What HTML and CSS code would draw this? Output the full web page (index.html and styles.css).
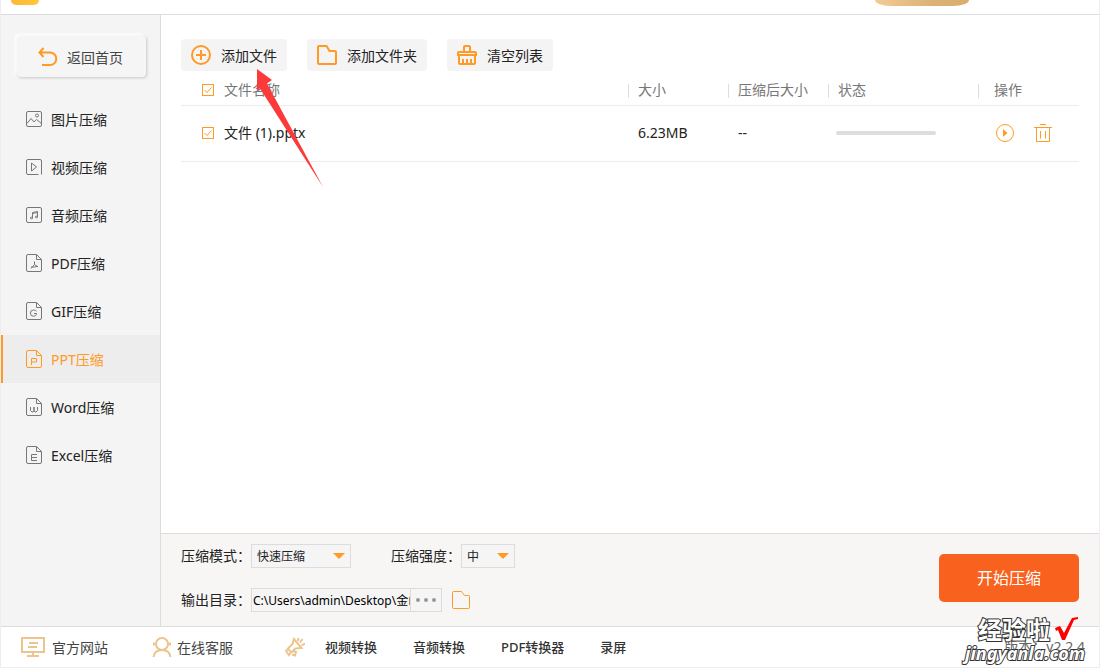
FILE: index.html
```html
<!DOCTYPE html>
<html lang="zh-CN">
<head>
<meta charset="utf-8">
<title>PPT压缩</title>
<link rel="stylesheet" href="styles.css">
</head>
<body>
<svg class="defs" aria-hidden="true">
  <symbol id="doc" viewBox="0 0 16 18"><path d="M2 .5h8.500l5 5v10.500a1.500 1.500 0 0 1-1.500 1.500H2A1.500 1.500 0 0 1 .5 16V2A1.500 1.500 0 0 1 2 .5zM10.500 .5v5h5"/></symbol>
  <symbol id="check" viewBox="0 0 12 12"><path d="M2.500 6l2.500 2.500 4.500-5"/></symbol>
</svg>
<div class="window">
  <header class="titlebar">
    <span class="logo"></span>
    <span class="vip"></span>
  </header>
  <div class="body">
    <aside class="sidebar">
      <button class="home" type="button">
        <svg width="20" height="20" viewBox="0 0 20 20" fill="none" stroke="#ff9a26" stroke-width="2"><path d="M5.500 1L1.500 5.500l4 4.500M1.500 5.500H12a6 6 0 0 1 0 12.500H4"/></svg>
        <span>返回首页</span>
      </button>
      <nav class="menu">
        <a class="item" href="#"><svg class="icon" viewBox="0 0 16 18"><rect x=".5" y="1.500" width="15" height="15" rx="1.500"/><circle cx="11" cy="5.500" r="1.500"/><path d="M1 13.500l4-5 3 3.500 2.500-2.500 5 4"/></svg><span>图片压缩</span></a>
        <a class="item" href="#"><svg class="icon" viewBox="0 0 16 18"><path d="M12.500 16.500H2A1.500 1.500 0 0 1 .5 15V3A1.500 1.500 0 0 1 2 1.500h12A1.500 1.500 0 0 1 15.500 3v13.500M5.500 5v8l5-4z"/></svg><span>视频压缩</span></a>
        <a class="item" href="#"><svg class="icon" viewBox="0 0 16 18"><rect x=".5" y="1.500" width="15" height="15" rx="1.500"/><path d="M6.500 12V6.500l5-1V11M6.500 7.500l5-1"/><ellipse cx="5.500" cy="12" rx="1.200" ry=".8"/><ellipse cx="10.500" cy="11" rx="1.200" ry=".8"/></svg><span>音频压缩</span></a>
        <a class="item" href="#"><svg class="icon" viewBox="0 0 16 18"><use href="#doc"/><path d="M8.500 7.500v3L5 14.500M8.500 10.500l3.500 2.500M5 13h3.500l3-.8"/></svg><span>PDF压缩</span></a>
        <a class="item" href="#"><svg class="icon" viewBox="0 0 16 18"><use href="#doc"/><path d="M10.500 9.200C9.500 8.200 8.500 8 7.500 8a3 3 0 0 0 0 6.200c1.500 0 3-.6 3-2.700H8"/></svg><span>GIF压缩</span></a>
        <a class="item active" href="#" aria-current="page"><svg class="icon" viewBox="0 0 16 18"><use href="#doc"/><path d="M5.500 15V8.500h5v3.500h-5"/></svg><span>PPT压缩</span></a>
        <a class="item" href="#"><svg class="icon" viewBox="0 0 16 18"><use href="#doc"/><path d="M4.500 9v3.500l1.500 1.500h1l1-1.500V9v3.500L9 14h1l1.500-1.500V9"/></svg><span>Word压缩</span></a>
        <a class="item" href="#"><svg class="icon" viewBox="0 0 16 18"><use href="#doc"/><path d="M11 8.500H5.500v6H11M5.500 11.500H11"/></svg><span>Excel压缩</span></a>
      </nav>
    </aside>
    <main class="main">
      <section class="content">
        <div class="toolbar">
          <button class="tool" type="button">
            <svg width="20" height="20" viewBox="0 0 20 20"><circle cx="10" cy="10" r="9"/><path d="M10 5v10M5 10h10"/></svg><span>添加文件</span>
          </button>
          <button class="tool" type="button">
            <svg width="20" height="20" viewBox="0 0 20 20"><path d="M2 1h7.500l3 5H18a1 1 0 0 1 1 1v11a1 1 0 0 1-1 1H2a1 1 0 0 1-1-1V2a1 1 0 0 1 1-1z"/></svg><span>添加文件夹</span>
          </button>
          <button class="tool" type="button">
            <svg width="20" height="20" viewBox="0 0 20 20"><path d="M7 6V2a1 1 0 0 1 1-1h4a1 1 0 0 1 1 1v4M2 7h16a1 1 0 0 1 1 1v2H1V8a1 1 0 0 1 1-1zM2 10v8a1 1 0 0 0 1 1h14a1 1 0 0 0 1-1v-8M6 14v5M10 14v5M14 14v5"/></svg><span>清空列表</span>
          </button>
        </div>
        <table class="files">
          <colgroup><col><col class="c-size"><col class="c-size"><col class="c-state"><col class="c-action"></colgroup>
          <thead>
            <tr>
              <th class="name"><label class="pick"><input type="checkbox" checked><svg><use href="#check"/></svg><span>文件名称</span></label></th>
              <th>大小</th><th>压缩后大小</th><th>状态</th><th class="action">操作</th>
            </tr>
          </thead>
          <tbody>
            <tr>
              <td class="name"><label class="pick"><input type="checkbox" checked><svg><use href="#check"/></svg><span>文件 (1).pptx</span></label></td>
              <td>6.23MB</td><td>--</td>
              <td class="state"><div class="bar"></div></td>
              <td class="action"><div class="acts">
                <button type="button" aria-label="开始"><svg width="18" height="18" viewBox="0 0 18 18"><circle cx="9" cy="9" r="8.500"/><path class="solid" d="M7 5l4.500 4L7 13z"/></svg></button>
                <button type="button" aria-label="删除"><svg width="18" height="18" viewBox="0 0 18 18"><path d="M6 .5h6M0 3.500h18M2.500 3.500v14h13v-14M6.500 7v7.500M11.500 7v7.500"/></svg></button>
              </div></td>
            </tr>
          </tbody>
        </table>
        <svg class="pointer" width="68" height="120" viewBox="0 0 68 120"><path d="M1 0l15 11-5 3.500 56 103.500L4 19.500 1 21z" fill="#fd3a3a"/></svg>
      </section>
      <section class="options">
        <div class="fields">
          <div class="line">
            <label for="mode">压缩模式：</label>
            <span class="drop wide"><select id="mode"><option>快速压缩</option></select></span>
            <label class="second" for="level">压缩强度：</label>
            <span class="drop"><select id="level"><option>中</option></select></span>
          </div>
          <div class="line">
            <label for="dir">输出目录：</label>
            <span class="path"><input id="dir" type="text" value="C:\Users\admin\Desktop\金山文档"><button type="button" aria-label="浏览"><i></i><i></i><i></i></button></span>
            <button class="folder" type="button" aria-label="打开目录"><svg width="18" height="18" viewBox="0 0 18 18"><path d="M1.500 .5h8l3 4h4a1 1 0 0 1 1 1v11a1 1 0 0 1-1 1h-15a1 1 0 0 1-1-1v-15a1 1 0 0 1 1-1z"/></svg></button>
          </div>
        </div>
        <button class="start" type="button">开始压缩</button>
      </section>
    </main>
  </div>
  <footer class="footer">
    <a class="site" href="#"><svg width="24" height="20" viewBox="0 0 24 20"><path d="M1 1h22v14H1zM8 6h9M7 10h9M12 15v4M6 19h12"/></svg><span>官方网站</span></a>
    <a class="help" href="#"><svg width="20" height="20" viewBox="0 0 20 20"><circle cx="10" cy="7" r="6"/><path d="M1.500 20c.5-4 3.500-7 8.500-7s8 3 8.500 7M2 5.500v3M18 5.500v3"/></svg><span>在线客服</span></a>
    <svg class="horn" width="20" height="20" viewBox="0 0 20 20"><path d="M9 2l7.500 9-6 .5-4.500 4L3 11.500 7.500 7zM3 11.500l-2 2.500 3 4 2-2.500M8 14l3 1-1 3.500-3-1M13 4l.5-3M15 5.500L17.500 2M16.500 8L20 7"/></svg>
    <nav class="more">
      <a href="#">视频转换</a><a href="#">音频转换</a><a href="#">PDF转换器</a><a href="#">录屏</a>
    </nav>
    <span class="version">版本：v2.2.4</span>
  </footer>
  <div class="mark">
    <div class="mark-top"><span>经验啦</span><svg width="24" height="24" viewBox="0 0 24 24"><path d="M0 11l5-2 4 7L17 1l6-1v2l-4 1-9 20H7L3 13l-2 1z" fill="#f00"/></svg></div>
    <div class="mark-url">jingyanla.com</div>
  </div>
</div>
</body>
</html>
```
FILE: styles.css
```css
* { box-sizing: border-box; }
body {
  margin: 0;
  color: #222;
  background: #fff;
  font: 14px/20px "Noto Sans", "Noto Sans CJK SC", sans-serif;
}
button, input, select { font: inherit; color: inherit; }
button { border: 0; padding: 0; background: none; cursor: pointer; }
a { color: inherit; text-decoration: none; }
svg { flex: none; fill: none; }
.defs { position: absolute; width: 0; height: 0; }

.window {
  position: relative;
  display: flex;
  flex-direction: column;
  min-height: 100vh;
  border: 1px solid #eee;
  border-top: 0;
}
.titlebar {
  display: flex;
  justify-content: space-between;
  height: 15px;
  padding: 0 130px 0 10px;
  border-bottom: 1px solid #dcdcdc;
}
.logo { width: 28px; height: 5px; border-radius: 0 0 6px 6px; background: linear-gradient(90deg, #ffb638, #ffc934); }
.vip { width: 94px; height: 6px; border-radius: 0 0 16px 16px / 0 0 6px 6px; background: linear-gradient(90deg, #f3cb95, #dcb376 60%, #d9ad6d); }
.body { display: flex; flex: 1; }

.sidebar { width: 160px; flex: none; padding-top: 21px; background: #f4f4f4; border-right: 1px solid #dcdcdc; }
.home span, .item span, .tool span { padding-top: 2px; }
.home {
  display: flex;
  align-items: center;
  gap: 9px;
  width: 129px;
  height: 41px;
  margin: 0 0 18px 16px;
  padding-left: 21px;
  border-radius: 4px;
  background: #f5f5f5;
  color: #444;
  box-shadow: 1px 1px 3px rgba(0, 0, 0, .18), -2px -2px 3px #fff;
}
.item {
  display: flex;
  align-items: center;
  gap: 9px;
  height: 48px;
  padding-left: 23px;
  border-left: 2px solid transparent;
}
.icon { width: 16px; height: 18px; stroke: #777; }
.active { color: #ff9a26; background: #ededed; border-color: #ff9a26; }
.active .icon { stroke: #ff9a26; }

.main { display: flex; flex: 1; flex-direction: column; min-width: 0; }
.content { position: relative; flex: 1; padding: 24px 20px 0; }
.toolbar { display: flex; gap: 20px; }
.tool {
  display: flex;
  align-items: center;
  gap: 10px;
  height: 32px;
  padding: 0 10px;
  border-radius: 4px;
  background: #f4f4f4;
}
.tool svg { stroke: #ff9a26; stroke-width: 2; }

.files { width: 100%; margin-top: 4px; table-layout: fixed; border-collapse: collapse; }
.c-size { width: 100px; }
.c-state { width: 150px; }
.c-action { width: 101px; }
.files th, .files td { padding: 0 0 0 10px; text-align: left; font-weight: 400; border-bottom: 1px solid #ececec; }
.files th {
  height: 30px;
  color: #777;
  background: linear-gradient(#ddd, #ddd) 0 9px / 1px 14px no-repeat;
}
.files td { height: 56px; }
.files .name { padding-left: 21px; background: none; }
.files .action { padding-left: 16px; }
.files .state { padding-left: 8px; }
.pick { position: relative; display: flex; align-items: center; gap: 10px; }
.pick input { appearance: none; width: 12px; height: 12px; margin: 0; border: 1px solid #ff9a26; }
.pick svg { position: absolute; left: 0; width: 12px; height: 12px; stroke: #ff9a26; pointer-events: none; }
.pick input:not(:checked) + svg { display: none; }
.bar { width: 100px; height: 4px; border-radius: 2px; background: #ddd; }
.acts { display: flex; gap: 20px; padding-left: 2px; }
.acts svg { display: block; stroke: #ff9a26; }
.acts .solid { fill: #ff9a26; stroke: none; }
.pointer { position: absolute; left: 95px; top: 54px; overflow: visible; }

.options {
  display: flex;
  align-items: center;
  justify-content: space-between;
  padding: 10px 20px 14px;
  border-top: 1px solid #dcdcdc;
  background: #f7f6f5;
}
.fields { display: grid; gap: 20px; }
.line { display: flex; align-items: center; height: 24px; }
.line label { width: 70px; white-space: nowrap; }
.line .second { margin-left: 40px; }
.drop { position: relative; width: 54px; height: 24px; font-size: 12px; }
.drop.wide { width: 100px; }
.drop select { appearance: none; width: 100%; height: 24px; padding: 2px 5px 0; border: 1px solid #dcdcdc; border-radius: 0; background: #f5f5f5; }
.drop::after {
  content: "";
  position: absolute;
  right: 6px;
  top: 9px;
  width: 12px;
  height: 6px;
  background: #ff9a26;
  clip-path: polygon(0 0, 100% 0, 50% 100%);
  pointer-events: none;
}
.path { display: flex; width: 191px; height: 24px; border: 1px solid #dcdcdc; background: #f5f5f5; color: #000; font-size: 12px; }
.path input { flex: 1; min-width: 0; padding: 2px 0 0 1px; border: 0; background: none; }
.path button { display: flex; align-items: center; justify-content: center; gap: 4px; width: 31px; border-left: 1px solid #dcdcdc; }
.path i { width: 4px; height: 4px; border-radius: 2px; background: #999; }
.folder { margin-left: 10px; }
.folder svg { display: block; stroke: #ff9a26; }
.start { width: 140px; height: 48px; border-radius: 5px; background: #f9611e; color: #fff; font-size: 16px; }

.footer { display: flex; align-items: center; height: 41px; padding: 0 14px 0 20px; border-top: 1px solid #dcdcdc; color: #444; }
.footer > a { display: flex; align-items: center; }
.footer a span { padding-top: 2px; }
.footer svg { stroke: #ecc48d; stroke-width: 2; }
.site { gap: 7px; }
.help { gap: 5px; margin-left: 44px; }
.horn { margin-left: 52px; }
.more { display: flex; gap: 36px; margin-left: 20px; color: #333; font-size: 13px; font-weight: 500; }
.version { margin-left: auto; color: #666; }

.mark { position: absolute; right: 14px; bottom: 4px; color: #fff; font-weight: 700; -webkit-text-stroke: 2px #333; paint-order: stroke fill; pointer-events: none; }
.mark-top { display: flex; justify-content: flex-end; gap: 5px; padding-right: 6px; font-size: 24px; line-height: 26px; }
.mark-url { font-size: 18px; line-height: 20px; font-style: italic; }
```
